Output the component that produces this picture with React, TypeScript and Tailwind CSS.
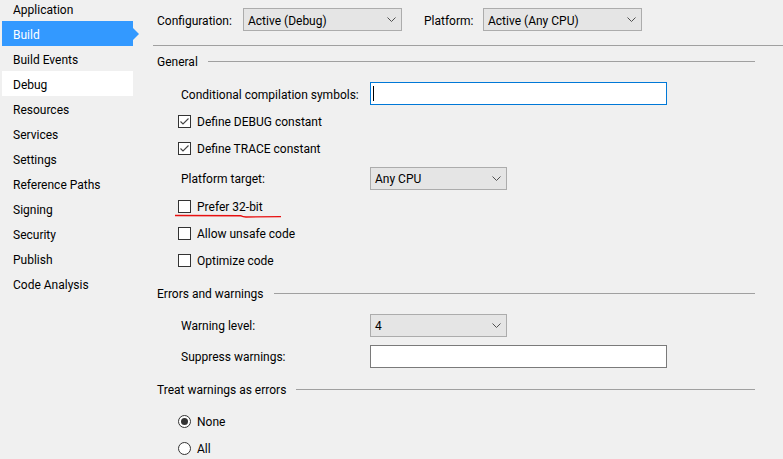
import React from "react";

const sideItems = [
  "Application",
  "Build",
  "Build Events",
  "Debug",
  "Resources",
  "Services",
  "Settings",
  "Reference Paths",
  "Signing",
  "Security",
  "Publish",
  "Code Analysis",
];

function Chevron() {
  return (
    <svg width="9" height="5" viewBox="0 0 9 5" className="shrink-0">
      <polyline points="0.5,0.5 4.5,4.5 8.5,0.5" fill="none" stroke="#505050" strokeWidth="1" />
    </svg>
  );
}

function Combo({ value, className }: { value: string; className: string }) {
  return (
    <div className={`${className} h-[23px] flex items-center justify-between border border-[#acacac] bg-[#e5e5e5] pl-[4px] pr-[5px]`}>
      <span className="pt-[2px]">{value}</span>
      <Chevron />
    </div>
  );
}

function Check({ checked, label }: { checked?: boolean; label: string }) {
  return (
    <div className="flex items-center pl-[38px]">
      <div className="w-[13px] h-[13px] border border-[#333333] bg-white flex items-center justify-center">
        {checked && (
          <svg width="11" height="11" viewBox="0 0 11 11">
            <polyline points="1.5,5.5 4,8 9.5,2.5" fill="none" stroke="#444444" strokeWidth="1.1" />
          </svg>
        )}
      </div>
      <span className="ml-[6px] pt-[2px]">{label}</span>
    </div>
  );
}

function Radio({ checked, label }: { checked?: boolean; label: string }) {
  return (
    <div className="flex items-center pl-[38px]">
      <div className="w-[13px] h-[13px] rounded-full border border-[#333333] bg-white flex items-center justify-center">
        {checked && <div className="w-[7px] h-[7px] rounded-full bg-[#333333]" />}
      </div>
      <span className="ml-[6px] pt-[2px]">{label}</span>
    </div>
  );
}

function Section({ title, className }: { title: string; className: string }) {
  return (
    <div className={`${className} flex items-center pl-[17px] pr-[28px]`}>
      <span className="pt-[2px]">{title}</span>
      <div className="flex-1 h-px bg-[#a0a0a0] ml-[10px]" />
    </div>
  );
}

export default function App() {
  return (
    <div className="w-[783px] h-[459px] overflow-hidden bg-[#f0f0f0] text-[12px] text-black font-['Roboto','Segoe_UI',sans-serif] flex">
      <div className="w-[140px] shrink-0 -mt-[4px]">
        {sideItems.map((s) => (
          <div
            key={s}
            className={
              s === "Build"
                ? "relative h-[25px] ml-[2px] w-[131px] pl-[11px] pt-[2px] flex items-center bg-[#3399ff] text-white"
                : s === "Debug"
                ? "h-[25px] ml-[2px] w-[131px] pl-[11px] pt-[2px] flex items-center bg-white"
                : "h-[25px] ml-[2px] w-[131px] pl-[11px] pt-[2px] flex items-center"
            }
          >
            {s}
            {s === "Build" && (
              <div className="absolute right-[-6px] top-[7px] w-0 h-0 border-y-[6px] border-y-transparent border-l-[6px] border-l-[#3399ff]" />
            )}
          </div>
        ))}
      </div>

      <div className="flex-1 flex flex-col">
        <div className="h-[46px] flex items-start pt-[8px] pl-[17px]">
          <div className="h-[23px] w-[86px] pt-[2px] flex items-center">Configuration:</div>
          <Combo value="Active (Debug)" className="w-[159px]" />
          <div className="h-[23px] w-[59px] ml-[22px] pt-[2px] flex items-center">Platform:</div>
          <Combo value="Active (Any CPU)" className="w-[159px]" />
        </div>
        <div className="h-px bg-[#a0a0a0] ml-[13px]" />

        <div className="pt-[1px] flex flex-col">
          <Section title="General" className="h-[28px]" />
          <div className="h-[36px] flex items-center pl-[41px]">
            <span className="w-[189px] pt-[3px]">Conditional compilation symbols:</span>
            <div className="w-[297px] h-[23px] border border-[#0078d7] bg-white flex items-center pl-[2px]">
              <div className="w-px h-[15px] bg-black" />
            </div>
          </div>
          <div className="h-[20px] flex items-center">
            <Check checked label="Define DEBUG constant" />
          </div>
          <div className="h-[34px] flex items-center">
            <Check checked label="Define TRACE constant" />
          </div>
          <div className="h-[26px] flex items-center pl-[41px]">
            <span className="w-[189px] pt-[2px]">Platform target:</span>
            <Combo value="Any CPU" className="w-[137px]" />
          </div>
          <div className="relative h-[30px] flex items-center">
            <Check label="Prefer 32-bit" />
            <svg className="absolute left-[35px] top-[23px]" width="108" height="5" viewBox="0 0 108 5">
              <path d="M0 1.5 L66 1.8 Q68 2.8 71 3 L106 2.6" fill="none" stroke="#e81010" strokeWidth="1.4" />
            </svg>
          </div>
          <div className="h-[24px] flex items-center">
            <Check label="Allow unsafe code" />
          </div>
          <div className="h-[30px] flex items-center">
            <Check label="Optimize code" />
          </div>

          <Section title="Errors and warnings" className="h-[36px]" />
          <div className="h-[28px] flex items-center pl-[41px]">
            <span className="w-[189px] pt-[2px]">Warning level:</span>
            <Combo value="4" className="w-[137px]" />
          </div>
          <div className="h-[34px] flex items-center pl-[41px]">
            <span className="w-[189px] pt-[2px]">Suppress warnings:</span>
            <div className="w-[297px] h-[23px] border border-[#7a7a7a] bg-white" />
          </div>

          <Section title="Treat warnings as errors" className="h-[32px]" />
          <div className="h-[32px] flex items-center">
            <Radio checked label="None" />
          </div>
          <div className="h-[22px] flex items-center">
            <Radio label="All" />
          </div>
        </div>
      </div>
    </div>
  );
}
